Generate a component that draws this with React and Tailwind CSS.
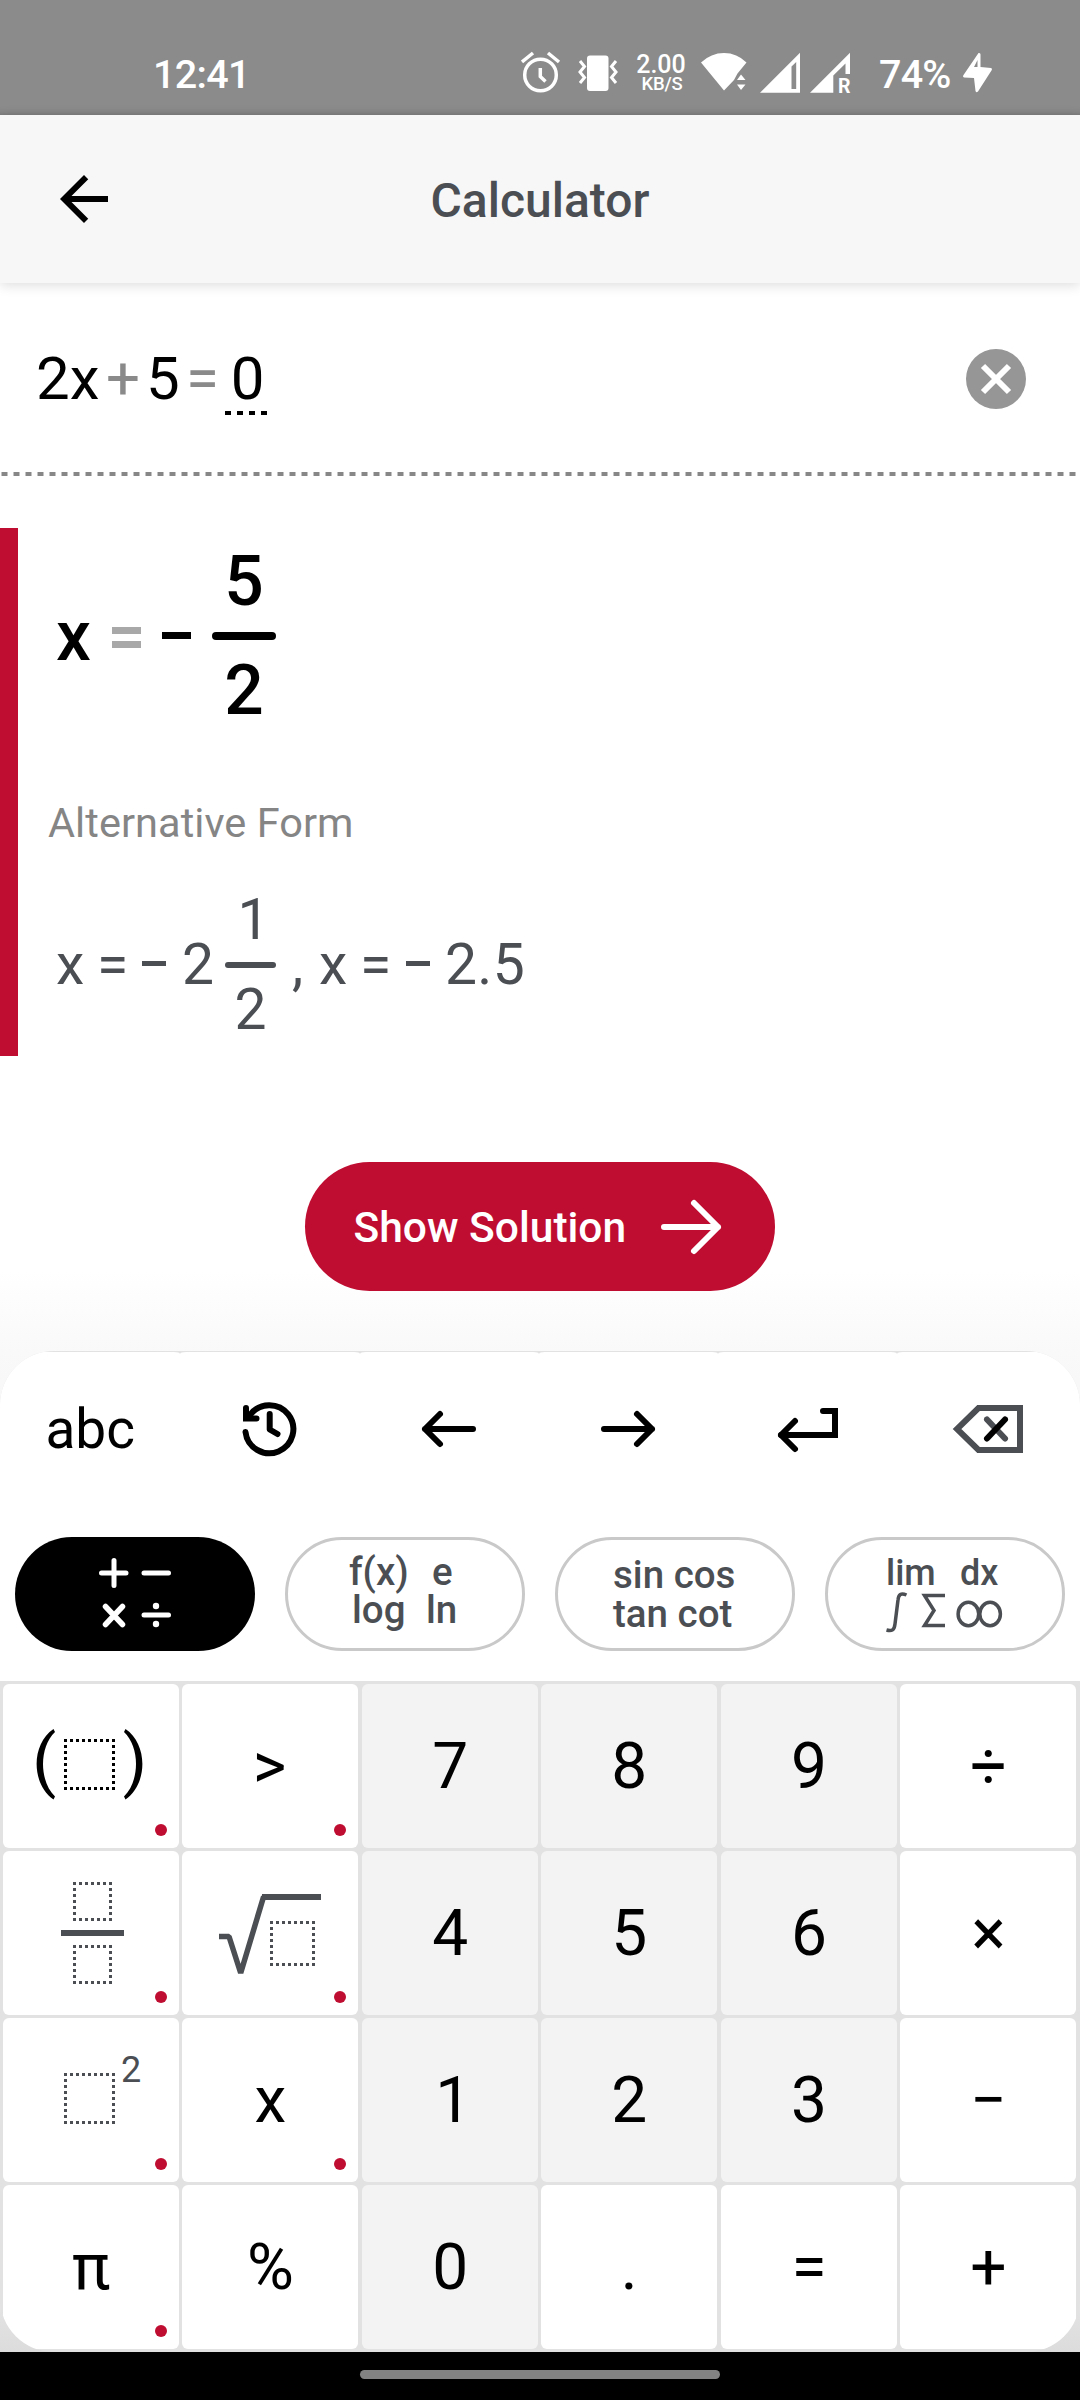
const INK = "#4b4f54";

/* Drawing whose viewBox is given in screen units, so one unit is one pixel. */
function Draw({ x, y, w, h, className = "", children }) {
  return (
    <svg
      width={w}
      height={h}
      viewBox={`${x} ${y} ${w} ${h}`}
      fill="none"
      className={"block shrink-0 " + className}
    >
      {children}
    </svg>
  );
}

/* Dotted placeholder square made of 3px dots on a 6px pitch. */
function Box({ x, y, s, color }) {
  const a = s - 1.5;
  return (
    <g stroke={color} strokeWidth="3" strokeDasharray="3 3">
      <path d={`M${x} ${y + 1.5}h${s}`} />
      <path d={`M${x} ${y + a}h${s}`} />
      <path d={`M${x + 1.5} ${y}v${s}`} />
      <path d={`M${x + a} ${y}v${s}`} />
    </g>
  );
}

function StatusBar() {
  return (
    <div className="flex h-[115px] items-start bg-[#8b8b8b] pl-[153px] text-white font-medium shadow-[inset_0_-6px_6px_-6px_rgba(0,0,0,0.2)]">
      <span className="mt-[55px] w-[368px] text-[39.5px] leading-none tracking-[-0.7px]">12:41</span>
      <Draw x={521} y={50} w={57} h={46} className="mt-[50px]">
        <g stroke="#fff" strokeWidth="3.5">
          <circle cx="540.5" cy="75" r="15.8" />
          <path d="M540.3 68v8.5l5.2 5" />
          <path d="M522 62l11-9M559 62l-11-9" />
        </g>
      </Draw>
      <Draw x={578} y={50} w={58} h={46} className="mt-[50px]">
        <rect x="587" y="55.5" width="21.5" height="35.5" rx="3" fill="#fff" />
        <g stroke="#fff" strokeWidth="3">
          <path d="M580 61l4.5 5.5l-4.5 5.5l4.5 5.5l-4.5 5.5" />
          <path d="M616 61l-4.5 5.5l4.5 5.5l-4.5 5.5l4.5 5.5" />
        </g>
      </Draw>
      <div className="mt-[52px] flex w-[50px] flex-col items-center whitespace-nowrap">
        <span className="text-[25px] leading-[25px]">2.00</span>
        <span className="pl-[2px] text-[18.5px] leading-[15px] tracking-[-0.2px]">KB/S</span>
      </div>
      <Draw x={686} y={50} w={74} h={46} className="mt-[50px]">
        <path d="M724 90.5L701 62.5Q711 53 724 53T746.5 62.5L737.5 73.5L734 80Z" fill="#fff" />
        <path d="M737 80l4-5.5l4.5 5.5zM737 84.5h8.5l-4.5 5.5z" fill="#fff" />
      </Draw>
      <Draw x={760} y={50} w={50} h={46} className="mt-[50px]">
        <path fillRule="evenodd" d="M760 92.7L800 52.7V92.7ZM791.5 66.5V89H796.2V62Z" fill="#fff" />
      </Draw>
      <Draw x={810} y={50} w={69} h={56} className="mt-[50px]">
        <path d="M810 92.7L850 52.7V74H845.5V63.5L833.3 75.5V92.7Z" fill="#fff" />
        <text x="838" y="92.7" fontSize="19.5" fontWeight="700" fill="#fff">R</text>
      </Draw>
      <span className="mt-[55px] w-[83px] text-[39.5px] leading-none tracking-[-0.8px]">74%</span>
      <Draw x={962} y={50} w={32} h={46} className="mt-[50px]">
        <path
          fillRule="evenodd"
          d="M978.5 53q2-.5 2 1.5V67L991 68q1.5.5.8 2L978 91.5q-2 1.5-2.5-.5L974 78L964 77.5q-1.5-.5-.8-2zM974 67H977.5V60Z"
          fill="#fff"
        />
      </Draw>
    </div>
  );
}

function Header() {
  return (
    <header className="relative z-10 flex h-[168px] items-center bg-[#f7f7f7] pl-[48px] shadow-[0_2px_12px_rgba(0,0,0,0.14)]">
      <svg width="72" height="72" viewBox="0 0 24 24" fill="#000">
        <path d="M20 11H7.83l5.59-5.59L12 4l-8 8 8 8 1.41-1.41L7.83 13H20v-2z" />
      </svg>
      <h1 className="mr-[120px] flex-1 pt-[3px] text-center text-[48px] leading-none font-medium text-[#4b4f54]">
        Calculator
      </h1>
    </header>
  );
}

function InputRow() {
  return (
    <div className="flex h-[189px] items-start pl-[36px] text-[60px] leading-[60px] text-black">
      <span className="mt-[66px] w-[70px]">2x</span>
      <span className="mt-[66px] w-[40px] text-[#8a8a8a]">+</span>
      <span className="mt-[66px] w-[40px]">5</span>
      <span className="mt-[66px] w-[39px] text-[#8a8a8a]">=</span>
      <span className="mt-[66px] h-[66px] w-[42px] bg-[repeating-linear-gradient(to_right,#000_0,#000_6px,transparent_6px,transparent_12px)] bg-[length:100%_4px] bg-bottom bg-no-repeat pl-[3px] text-center">
        0
      </span>
      <Draw x={966} y={349} w={60} h={60} className="mt-[66px] ml-[699px]">
        <circle cx="996" cy="379" r="30" fill="#969696" />
        <path d="M983 366l26 26M1009 366l-26 26" stroke="#fff" strokeWidth="6" />
      </Draw>
    </div>
  );
}

function Result() {
  return (
    <div className="h-[528px] border-l-[18px] border-[#bf0d31]">
      <div className="flex h-[232px] items-start pl-[38px] text-[69.5px] leading-[70px] font-medium text-black">
        <span className="mt-[74px] w-[52px]">x</span>
        <span className="mt-[99px] flex w-[54px] flex-col gap-[7px] pl-[4px]">
          <i className="h-[7px] w-[29px] bg-[#a8a8a8]" />
          <i className="h-[7px] w-[29px] bg-[#a8a8a8]" />
        </span>
        <span className="mt-[104px] h-[7px] w-[29px] bg-black" />
        <span className="mt-[19px] ml-[21px] flex w-[64px] flex-col items-center">
          <span>5</span>
          <i className="mt-[15px] mb-[16px] h-[8px] w-[64px] rounded-full bg-black" />
          <span>2</span>
        </span>
      </div>
      <p className="pt-[42px] pl-[30px] text-[41.5px] leading-[42px] tracking-[0.05px] text-[#858585]">
        Alternative Form
      </p>
      <div className="flex items-start pl-[38px] text-[57px] leading-[57px] text-[#4b4f54]">
        <span className="mt-[92px] w-[41px]">x</span>
        <span className="mt-[92px] w-[45px]">=</span>
        <i className="mt-[117px] mr-[16px] h-[5px] w-[24px] bg-[#4b4f54]" />
        <span className="mt-[92px] w-[43px]">2</span>
        <span className="mt-[47px] flex w-[51px] flex-col items-center">
          <span className="pl-[6px]">1</span>
          <i className="mt-[14px] mb-[13px] h-[6px] w-[51px] rounded-full bg-[#4b4f54]" />
          <span>2</span>
        </span>
        <span className="mt-[92px] ml-[16px] w-[27px]">,</span>
        <span className="mt-[92px] w-[41px]">x</span>
        <span className="mt-[92px] w-[46px]">=</span>
        <i className="mt-[117px] mr-[15px] h-[5px] w-[24px] bg-[#4b4f54]" />
        <span className="mt-[92px] tracking-[0.3px]">2.5</span>
      </div>
    </div>
  );
}

function SolutionButton() {
  return (
    <button className="mx-auto flex h-[129px] w-[470px] items-center rounded-full bg-[#bf0d31] pl-[48.5px] text-white">
      <span className="w-[304.5px] pt-[4px] text-left text-[42.5px] leading-none font-medium whitespace-nowrap">
        Show Solution
      </span>
      <Draw x={658} y={1197} w={66} h={60}>
        <path
          d="M664 1227H718M694 1203L718 1227L694 1251"
          stroke="#fff"
          strokeWidth="6"
          strokeLinecap="round"
          strokeLinejoin="round"
        />
      </Draw>
    </button>
  );
}

const toolIcons = [
  <span key="abc" className="text-[55px] leading-none">abc</span>,
  <Draw key="hist" x={240} y={1399} w={60} h={60}>
    <g stroke="#000" strokeWidth="6" strokeLinecap="round">
      <path d="M245.5 1432A24 24 0 1 0 250 1415" />
      <path d="M246 1408V1418.5H256.5" />
      <path d="M269.7 1414V1429.5L277.5 1434" strokeLinejoin="round" />
    </g>
  </Draw>,
  <Draw key="left" x={419} y={1399} w={60} h={60}>
    <path d="M473 1429H425M440 1414L425 1429L440 1444" stroke="#000" strokeWidth="6" strokeLinecap="round" strokeLinejoin="round" />
  </Draw>,
  <Draw key="right" x={598} y={1399} w={60} h={60}>
    <path d="M604 1429H652M637 1414L652 1429L637 1444" stroke="#000" strokeWidth="6" strokeLinecap="round" strokeLinejoin="round" />
  </Draw>,
  <Draw key="enter" x={775} y={1399} w={66} h={60}>
    <g stroke="#000" strokeWidth="6" strokeLinecap="round">
      <path d="M823 1411H835V1435H781" />
      <path d="M795 1421L781 1435L795 1449" strokeLinejoin="round" />
    </g>
  </Draw>,
  <Draw key="del" x={950} y={1399} w={76} h={60}>
    <path d="M1020 1408V1450H978.5L957 1429L978.5 1408Z" stroke={INK} strokeWidth="6" />
    <path d="M987 1419.5L1005 1438.5" stroke={INK} strokeWidth="6" strokeLinecap="round" />
    <path d="M1005 1419.5L987 1438.5" stroke="#000" strokeWidth="6" strokeLinecap="round" />
  </Draw>,
];

function Toolbar() {
  return (
    <div className="grid h-[186px] grid-cols-[180.4px_repeat(4,179.2px)_182.8px] bg-[#e2e2e2] pt-px">
      {toolIcons.map((icon, i) => (
        <div
          key={i}
          className="flex items-start justify-center bg-white pt-[47px] [border-radius:6px_6px_0_0/2px_2px_0_0] last:pr-[2px]"
        >
          <div className="flex h-[60px] items-center">{icon}</div>
        </div>
      ))}
    </div>
  );
}

const pill = "h-[114px] w-[240px] rounded-full border-[3px] border-[#c9c9c9] whitespace-pre font-medium text-[#4b4f54]";

function Tabs() {
  return (
    <div className="flex h-[144px] gap-[30px] bg-white pl-[15px]">
      <div className="flex h-[114px] w-[240px] justify-center rounded-full bg-black">
        <Draw x={95} y={1537} w={80} h={114}>
          <g stroke="#fff" strokeWidth="5" strokeLinecap="round">
            <path d="M114 1560.5V1585.5M101.5 1573H126M144 1573H168.5" />
            <path d="M105.5 1606.5L122.5 1624.5M122.5 1606.5L105.5 1624.5" strokeWidth="5.5" />
            <path d="M144 1615H168.5" />
          </g>
          <circle cx="156" cy="1606" r="3.2" fill="#fff" />
          <circle cx="156" cy="1624" r="3.2" fill="#fff" />
        </Draw>
      </div>
      <div className={pill + " flex flex-col pl-[61px] text-[38.5px] leading-[39px] pt-[12px]"}>
        <div className="flex"><span className="w-[83px]">f(x)</span><span>e</span></div>
        <div className="-mt-px flex pl-[3px]"><span className="w-[74px]">log</span><span>ln</span></div>
      </div>
      <div className={pill + " flex flex-col pl-[55px] text-[38.5px] leading-[39px] pt-[15px]"}>
        <span>sin cos</span>
        <span>tan cot</span>
      </div>
      <div className={pill + " pl-[57px] text-[36px] leading-[36px] pt-[15px]"}>
        <div className="flex pl-px"><span className="w-[74px]">lim</span><span>dx</span></div>
        <Draw x={885} y={1591} w={120} h={44}>
          <g stroke={INK} strokeWidth="3.5">
            <path d="M906.5 1595C901 1592.5 898.5 1594.5 898 1600L895 1624C894.3 1630 892 1631.5 886.5 1630" />
            <path d="M945 1595.5H924.5L934 1610.5L924.5 1625.5H945" />
            <ellipse cx="968.4" cy="1614" rx="10.3" ry="11.7" />
            <ellipse cx="990.1" cy="1614" rx="10.3" ry="11.7" />
          </g>
        </Draw>
      </div>
    </div>
  );
}

const keys = [
  { dot: 1, art: (
    <Draw x={3} y={1684} w={176} h={164}>
      <path d="M53.5 1729C31 1744 31 1784 53.5 1799.5L55 1796.5C39 1781 39 1747 55 1732Z" fill="#000" />
      <path d="M125.5 1729C148 1744 148 1784 125.5 1799.5L124 1796.5C140 1781 140 1747 124 1732Z" fill="#000" />
      <Box x={64} y={1739} s={51} color="#000" />
    </Draw>) },
  { dot: 1, t: ">", nudge: "pr-[2px]" }, { g: 1, t: "7", nudge: "pl-px" }, { g: 1, t: "8" }, { g: 1, t: "9", nudge: "pl-px" }, { t: "÷", nudge: "pl-px" },
  { dot: 1, art: (
    <Draw x={3} y={1851} w={176} h={164}>
      <Box x={73} y={1882} s={39} color={INK} />
      <path d="M61 1933H124" stroke={INK} strokeWidth="6" />
      <Box x={73} y={1945} s={39} color={INK} />
    </Draw>) },
  { dot: 1, art: (
    <Draw x={182} y={1851} w={176} h={164}>
      <path d="M219 1936.5H229L240.7 1973L263.5 1897H321" stroke={INK} strokeWidth="5.5" strokeLinejoin="bevel" />
      <path d="M262 1897H321" stroke={INK} strokeWidth="6" />
      <Box x={270} y={1921} s={45} color={INK} />
    </Draw>) },
  { g: 1, t: "4", nudge: "pl-px" }, { g: 1, t: "5" }, { g: 1, t: "6", nudge: "pl-px" }, { t: "×", nudge: "pl-px" },
  { dot: 1, art: (
    <Draw x={3} y={2018} w={176} h={164}>
      <Box x={64} y={2073} s={51} color={INK} />
      <text x="121" y="2082" fontSize="36" fill={INK}>2</text>
    </Draw>) },
  { dot: 1, t: "x" }, { g: 1, t: "1", nudge: "pl-[7px]" }, { g: 1, t: "2" }, { g: 1, t: "3", nudge: "pl-px" }, { t: "−", nudge: "pl-px" },
  { dot: 1, t: "π" }, { t: "%" }, { g: 1, t: "0", nudge: "pl-px" }, { t: "." }, { t: "=", nudge: "pl-px" }, { t: "+", nudge: "pl-px" },
];

function Keypad() {
  return (
    <div className="grid grid-cols-[repeat(6,176px)] grid-rows-[repeat(4,164px)] gap-x-[3.4px] gap-y-[3px] bg-[#e2e2e2] py-[3px] pl-[3px]">
      {keys.map((k, i) => (
        <div
          key={i}
          className={
            "relative flex items-center justify-center rounded-[6px] text-[64px] leading-none text-black " +
            (k.g ? "bg-[#f3f3f3]" : "bg-white")
          }
        >
          {k.art || <span className={"pt-[2px] " + (k.nudge || "")}>{k.t}</span>}
          {k.dot && <i className="absolute right-[12px] bottom-[12px] size-[12px] rounded-full bg-[#bf0d31]" />}
        </div>
      ))}
    </div>
  );
}

export default function App() {
  return (
    <div className="flex h-[2400px] w-[1080px] flex-col overflow-hidden bg-white font-[Roboto,sans-serif]">
      <StatusBar />
      <Header />
      <InputRow />
      <div className="h-[4px] bg-[repeating-linear-gradient(to_right,#878787_0,#878787_6px,transparent_6px,transparent_12px)] bg-[position:1.5px_0]" />
      <main className="h-[875px] bg-[linear-gradient(to_bottom,#fff_0,#fff_795px,#f9f9f9_875px)] pt-[52px]">
        <Result />
        <div className="pt-[106px]">
          <SolutionButton />
        </div>
      </main>
      <div className="bg-[linear-gradient(to_bottom,#f9f9f9_0,#f7f7f7_60px,#e4e4e4_950px,#dcdcdc_1001px)]">
        <section className="h-[1001px] overflow-hidden rounded-[54px]">
          <Toolbar />
          <Tabs />
          <Keypad />
        </section>
      </div>
      <footer className="flex h-[48px] justify-center bg-black pt-[18px]">
        <div className="h-[9px] w-[360px] rounded-full bg-[#828282]" />
      </footer>
    </div>
  );
}
